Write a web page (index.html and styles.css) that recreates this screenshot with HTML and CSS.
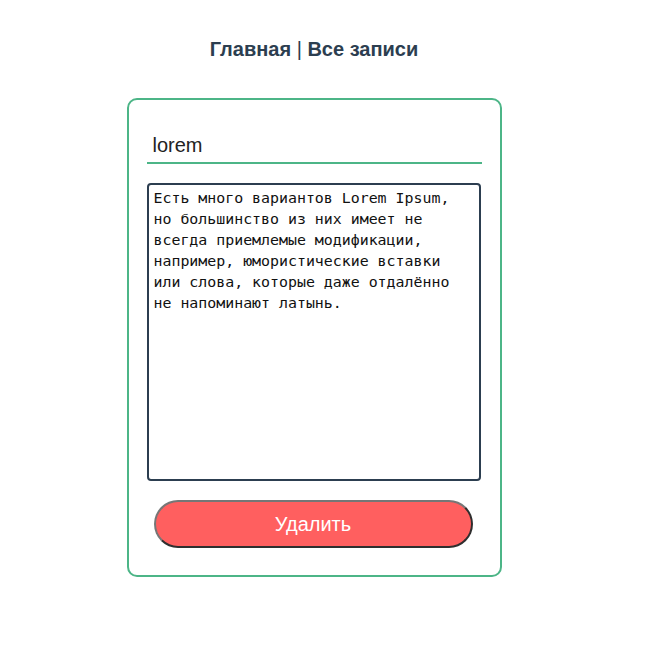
FILE: index.html
```html
<!DOCTYPE html>
<html lang="ru">
<head>
    <meta charset="UTF-8">
    <meta name="viewport" content="width=device-width, initial-scale=1.0">
    <title>Запись</title>
    <link rel="stylesheet" href="styles.css">
</head>
<body>
    <div id="app">
        <nav class="nav">
            <a href="#" class="nav-link">Главная</a> | <a href="#" class="nav-link">Все записи</a>
        </nav>
        <div class="note-card">
            <input type="text" class="note-title" value="lorem">
            <textarea class="note-text">Есть много вариантов Lorem Ipsum, но большинство из них имеет не всегда приемлемые модификации, например, юмористические вставки или слова, которые даже отдалённо не напоминают латынь.</textarea>
            <button class="btn-delete">Удалить</button>
        </div>
    </div>
</body>
</html>
```

FILE: styles.css
```css
body {
    margin: 8px;
    background: #ffffff;
}
#app {
    width: 612px;
    font-family: 'Liberation Sans', Arial, sans-serif;
    color: #2c3e50;
}
.nav {
    padding: 30px 0 30px;
    text-align: center;
    font-size: 20px;
    line-height: 23px;
}
.nav-link {
    font-weight: bold;
    color: #2c3e50;
    text-decoration: none;
}
.note-card {
    box-sizing: border-box;
    width: 375px;
    margin: 7px auto 0;
    border: 2px solid #4cb587;
    border-radius: 10px;
    padding: 20px 17px 27px 18px;
    display: flex;
    flex-direction: column;
}
.note-title {
    box-sizing: border-box;
    width: 335px;
    height: 44px;
    border: none;
    border-bottom: 2px solid #4cb587;
    padding: 8px 6px 0;
    font-family: 'Liberation Sans', Arial, sans-serif;
    font-size: 20px;
    color: #222;
    outline: none;
}
.note-text {
    box-sizing: border-box;
    width: 334px;
    height: 298px;
    margin-top: 19px;
    border: 2px solid #2c3e50;
    border-radius: 4px;
    padding: 3px 24px 5px 5px;
    font-family: 'DejaVu Sans Mono', monospace;
    font-size: 14.9px;
    line-height: 21px;
    color: #111;
    resize: none;
}
.btn-delete {
    box-sizing: border-box;
    width: 319px;
    height: 48px;
    margin: 19px 0 0 7px;
    border: 2px solid;
    border-color: #767676 #2e2e2e #2e2e2e #767676;
    border-radius: 24px;
    background: #ff5f5f;
    color: #ffffff;
    font-family: 'Liberation Sans', Arial, sans-serif;
    font-size: 20px;
    cursor: pointer;
}
```
